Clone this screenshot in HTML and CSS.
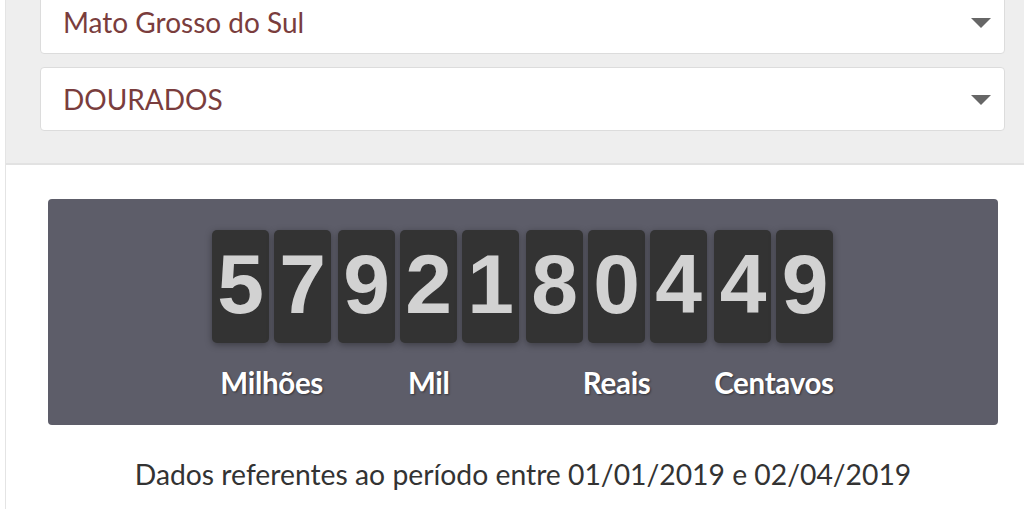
FILE: index.html
```html
<!DOCTYPE html>
<html lang="pt-BR">
<head>
<meta charset="utf-8">
<link rel="stylesheet" href="styles.css">
</head>
<body>
<div class="page">
  <div class="filters">
    <div class="select select-first">
      <span class="select-text">Mato Grosso do Sul</span>
      <span class="caret"></span>
    </div>
    <div class="select">
      <span class="select-text">DOURADOS</span>
      <span class="caret"></span>
    </div>
  </div>
  <div class="content">
    <div class="counter">
      <div class="group">
        <div class="digits"><span class="digit">5</span><span class="digit">7</span></div>
        <div class="label">Milhões</div>
      </div>
      <div class="group">
        <div class="digits"><span class="digit">9</span><span class="digit">2</span><span class="digit">1</span></div>
        <div class="label">Mil</div>
      </div>
      <div class="group">
        <div class="digits"><span class="digit">8</span><span class="digit">0</span><span class="digit">4</span></div>
        <div class="label">Reais</div>
      </div>
      <div class="group">
        <div class="digits"><span class="digit">4</span><span class="digit">9</span></div>
        <div class="label">Centavos</div>
      </div>
    </div>
    <p class="period">Dados referentes ao período entre 01/01/2019 e 02/04/2019</p>
  </div>
</div>
</body>
</html>
```

FILE: styles.css
```css
html, body {
  margin: 0;
  padding: 0;
  background: #ffffff;
  overflow: hidden;
}

body {
  font-family: Lato, "Liberation Sans", sans-serif;
}

.page {
  margin-left: 5px;
  border-left: 1px solid #e4e4e4;
  min-height: 519px;
}

.filters {
  background: #eeeeee;
  border-bottom: 2px solid #e2e2e2;
  padding: 0 19px 32px 34px;
  margin-top: -10px;
  display: flex;
  flex-direction: column;
  gap: 13px;
}

.select {
  height: 62px;
  background: #ffffff;
  border: 1px solid #dcdcdc;
  border-radius: 4px;
  display: flex;
  align-items: center;
  justify-content: space-between;
  padding: 0 13px 0 22px;
}

.select-text {
  color: #7a3d3d;
  font-size: 28px;
}

.caret {
  width: 0;
  height: 0;
  border-left: 10px solid transparent;
  border-right: 10px solid transparent;
  border-top: 10px solid #666666;
  margin-top: 2px;
}

.content {
  padding: 34px 26px 0 42px;
}

.counter {
  background: #5d5d69;
  border-radius: 4px;
  height: 226px;
  box-sizing: border-box;
  padding-top: 31px;
  display: flex;
  justify-content: center;
  gap: 7px;
}

.group {
  display: flex;
  flex-direction: column;
  align-items: center;
}

.digits {
  display: flex;
  gap: 5px;
}

.digit {
  width: 57px;
  height: 113px;
  box-sizing: border-box;
  padding-bottom: 5px;
  background: #333333;
  border-radius: 5px;
  box-shadow: 0 2px 7px rgba(0, 0, 0, 0.35);
  color: #d2d2d2;
  font-family: "Liberation Sans", Arial, sans-serif;
  font-weight: bold;
  font-size: 84px;
  display: flex;
  align-items: center;
  justify-content: center;
  line-height: 1;
}

.label {
  margin-top: 22px;
  color: #ffffff;
  font-weight: bold;
  font-size: 29.5px;
  letter-spacing: -0.3px;
  line-height: 1.2;
  text-shadow: 1px 1px 2px rgba(0, 0, 0, 0.45);
}

.period {
  margin: 33px 0 0;
  text-align: center;
  color: #333333;
  font-size: 28.3px;
  line-height: 1.2;
}
```
